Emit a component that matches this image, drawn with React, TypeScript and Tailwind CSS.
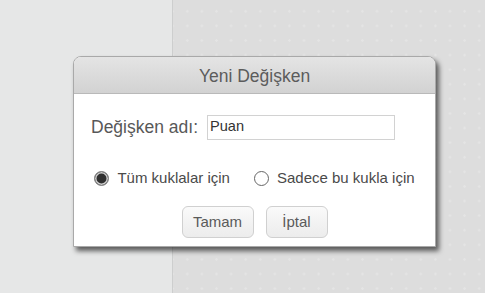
import React from "react";

export default function App() {
  return (
    <div
      className="relative w-[485px] h-[293px] overflow-hidden flex"
      style={{ fontFamily: '"Liberation Sans", Arial, sans-serif' }}
    >
      <div className="w-[173px] h-full bg-[#e6e7e7] border-r border-[#cdcece]" />
      <div className="flex-1 h-full bg-[#dddddd] bg-[radial-gradient(circle,#e4e4e4_1px,transparent_1.5px)] bg-[length:14.6px_14.6px] bg-[position:7px_4px]" />

      <div className="absolute left-[73px] top-[56px] w-[363px] h-[191px] flex flex-col bg-white border border-[#a9a9a9] rounded-t-[8px] shadow-[3px_4px_5px_rgba(0,0,0,0.6)]">
        <div className="h-[37px] shrink-0 flex items-center justify-center rounded-t-[7px] bg-gradient-to-b from-[#e4e4e4] to-[#d2d2d2] border-b border-[#b9b9b9] text-[17.5px] text-[#5c5c5c] pt-[2px]">
          Yeni Değişken
        </div>
        <div className="flex-1 flex flex-col items-center">
          <div className="mt-[20px] w-full flex items-center pl-[17px]">
            <span className="text-[17.5px] text-[#585858]">Değişken adı:</span>
            <div className="ml-[9px] w-[188px] h-[25px] border border-[#d2d2d2] flex items-center pl-[2px] text-[14.6px] text-[#333]">
              Puan
            </div>
          </div>
          <div className="mt-[27px] flex items-center text-[15px] text-[#4a4a4a]">
            <span className="w-[15px] h-[15px] rounded-full border border-[#888] bg-[#303030] shadow-[inset_0_0_0_1.5px_#cfcfcf]" />
            <span className="ml-[8px]">Tüm kuklalar için</span>
            <span className="ml-[24px] w-[15px] h-[15px] rounded-full border-[1.5px] border-[#666] bg-white" />
            <span className="ml-[8px]">Sadece bu kukla için</span>
          </div>
          <div className="mt-[16px] flex items-center gap-[12px] text-[15px] text-[#5a5a5a]">
            <div className="w-[72px] h-[32px] flex items-center justify-center rounded-[6px] border border-[#d0d0d0] bg-gradient-to-b from-[#fafafa] to-[#ececec]">
              Tamam
            </div>
            <div className="w-[62px] h-[32px] flex items-center justify-center rounded-[6px] border border-[#d0d0d0] bg-gradient-to-b from-[#fafafa] to-[#ececec]">
              İptal
            </div>
          </div>
        </div>
      </div>
    </div>
  );
}
